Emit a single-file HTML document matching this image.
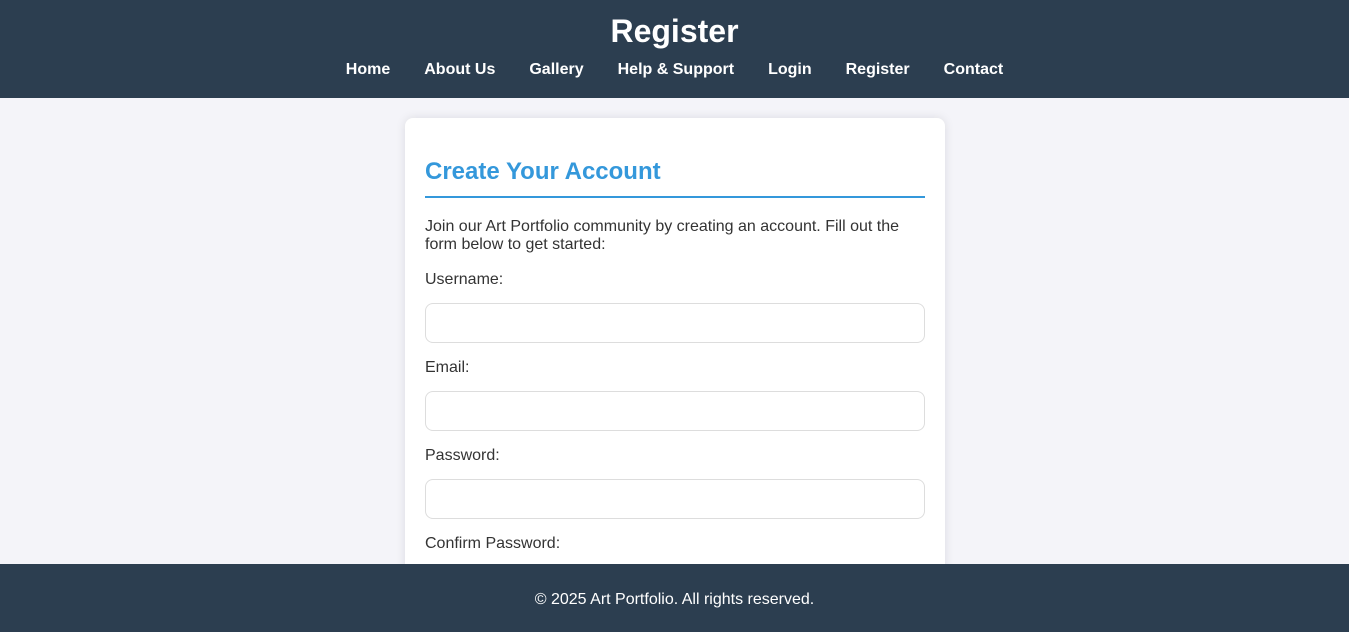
<!DOCTYPE html>
<html><head><meta charset="utf-8"><style>
*{box-sizing:border-box}
html,body{height:632px;overflow:hidden}
body{margin:0;background:#f4f4f9;font-family:"Liberation Sans",Arial,sans-serif;color:#333;position:relative}
header{background:#2c3e50;color:#fff;height:98px;text-align:center;padding-top:12px}
header h1{margin:0;font-size:32px;line-height:38px;font-weight:bold}
nav{margin-top:11px;font-weight:bold;font-size:16px}
nav a{color:#fff;text-decoration:none;margin:0 17px}
.card{position:absolute;left:405px;top:118px;width:540px;height:500px;background:#fff;border-radius:8px;box-shadow:0 0 10px rgba(0,0,0,.1);padding:20px}
h2{margin:20px 0 0;color:#3498db;font-size:24px;line-height:28px;padding-bottom:10px;border-bottom:2px solid #3498db}
p{margin:20px 0 0;font-size:16px;line-height:18px}
label{display:block;font-size:16px;line-height:18px;margin-top:16px}
label.f{margin-top:17px}
.in{height:40px;border:1px solid #ddd;border-radius:8px;margin-top:14px}
footer{position:absolute;left:0;top:564px;width:1349px;height:68px;background:#2c3e50;color:#fff;text-align:center;font-size:16px;line-height:72px}
</style></head><body>
<header><h1>Register</h1>
<nav><a>Home</a><a>About Us</a><a>Gallery</a><a>Help &amp; Support</a><a>Login</a><a>Register</a><a>Contact</a></nav></header>
<div class="card">
<h2>Create Your Account</h2>
<p>Join our Art Portfolio community by creating an account. Fill out the form below to get started:</p>
<label class="f">Username:</label><div class="in"></div>
<label>Email:</label><div class="in"></div>
<label>Password:</label><div class="in"></div>
<label>Confirm Password:</label><div class="in"></div>
</div>
<footer>© 2025 Art Portfolio. All rights reserved.</footer>
</body></html>
